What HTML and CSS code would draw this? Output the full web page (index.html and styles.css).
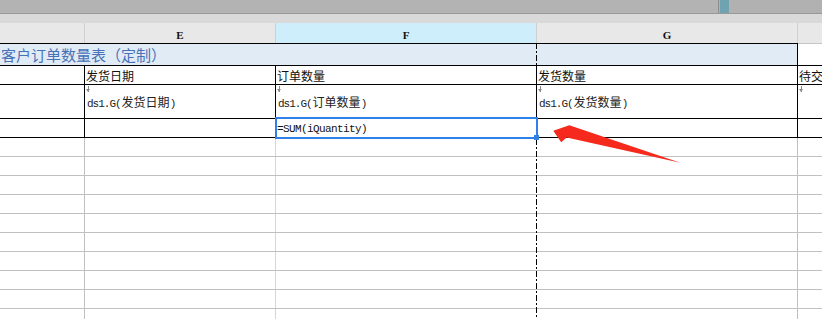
FILE: index.html
```html
<!DOCTYPE html>
<html lang="zh-CN">
<head>
  <meta charset="UTF-8" />
  <meta name="viewport" content="width=device-width, initial-scale=1.0"/>
  <title>客户订单数量表</title>
  <link rel="stylesheet" href="styles.css">
</head>
<body>

  <div class="scrollbar">
    <div class="thumb"></div>
    <div class="marker"></div>
  </div>
  <div class="strip"></div>

  <div class="sheet">
    <div class="colhead">
      <div class="c a"></div>
      <div class="c e">E</div>
      <div class="c f active">F</div>
      <div class="c g">G</div>
      <div class="c h"></div>
    </div>

    <div class="row title">
      <div class="c merged">客户订单数量表（定制）</div>
      <div class="c h"></div>
    </div>

    <div class="row dark labels">
      <div class="c a"></div>
      <div class="c e">发货日期</div>
      <div class="c f">订单数量</div>
      <div class="c g">发货数量</div>
      <div class="c h">待交数量</div>
    </div>

    <div class="row dark fields">
      <div class="c a"></div>
      <div class="c e"><span class="mark"></span><span class="code">ds1.G(</span>发货日期<span class="code">)</span></div>
      <div class="c f"><span class="mark"></span><span class="code">ds1.G(</span>订单数量<span class="code">)</span></div>
      <div class="c g"><span class="mark"></span><span class="code">ds1.G(</span>发货数量<span class="code">)</span></div>
      <div class="c h"><span class="mark"></span></div>
    </div>

    <div class="row dark sum">
      <div class="c a"></div>
      <div class="c e"></div>
      <div class="c f"><span class="formula">=SUM(iQuantity)</span></div>
      <div class="c g"></div>
      <div class="c h"></div>
    </div>

    <div class="row grid"><div class="c a"></div><div class="c e"></div><div class="c f"></div><div class="c g"></div><div class="c h"></div></div>
    <div class="row grid"><div class="c a"></div><div class="c e"></div><div class="c f"></div><div class="c g"></div><div class="c h"></div></div>
    <div class="row grid"><div class="c a"></div><div class="c e"></div><div class="c f"></div><div class="c g"></div><div class="c h"></div></div>
    <div class="row grid"><div class="c a"></div><div class="c e"></div><div class="c f"></div><div class="c g"></div><div class="c h"></div></div>
    <div class="row grid"><div class="c a"></div><div class="c e"></div><div class="c f"></div><div class="c g"></div><div class="c h"></div></div>
    <div class="row grid"><div class="c a"></div><div class="c e"></div><div class="c f"></div><div class="c g"></div><div class="c h"></div></div>
    <div class="row grid"><div class="c a"></div><div class="c e"></div><div class="c f"></div><div class="c g"></div><div class="c h"></div></div>
    <div class="row grid"><div class="c a"></div><div class="c e"></div><div class="c f"></div><div class="c g"></div><div class="c h"></div></div>
    <div class="row grid"><div class="c a"></div><div class="c e"></div><div class="c f"></div><div class="c g"></div><div class="c h"></div></div>
    <div class="row grid"><div class="c a"></div><div class="c e"></div><div class="c f"></div><div class="c g"></div><div class="c h"></div></div>

    <div class="pagebreak"></div>
    <div class="selection"><span class="handle"></span></div>

    <svg class="pointer" width="135" height="45" viewBox="0 0 135 45">
      <polygon points="3.3,7.7 19.3,2.2 130.3,39.7 16.7,14.6 11.2,19.2" fill="#f5291c"/>
    </svg>
  </div>

</body>
</html>
```

FILE: styles.css
```css
body {
  margin: 0;
  width: 822px;
  height: 319px;
  overflow: hidden;
  background: #fff;
  font-family: "Noto Sans CJK SC", sans-serif;
  color: #111;
}

.scrollbar {
  display: flex;
  height: 13px;
  background: #b1b1b1;
  border-bottom: 1px solid #989898;
}

.scrollbar .thumb {
  width: 719px;
  box-sizing: border-box;
  background: #b3b3b3;
  border-right: 1px solid #8e8e8e;
}

.scrollbar .marker {
  width: 9px;
  margin-left: 1px;
  background: #6fa3b2;
}

.strip {
  height: 9px;
  background: #d9d9d9;
}

.sheet {
  position: relative;
}

.colhead,
.row {
  display: flex;
}

.c {
  box-sizing: border-box;
  border-right: 1px solid transparent;
  white-space: nowrap;
  overflow: hidden;
}

.a { width: 85px; }
.e { width: 191px; }
.f { width: 261px; }
.g { width: 261px; }
.h { flex: 1; border-right: none; }

/* column letters */
.colhead {
  height: 20px;
  background: #e8e8e8;
}

.colhead .c {
  border-right-color: #d0d0d0;
  text-align: center;
  font-family: "Liberation Serif", serif;
  font-weight: bold;
  font-size: 11px;
  line-height: 20px;
  padding-top: 2px;
  color: #111;
}

.colhead .active {
  background: #cdeefa;
}

/* title row */
.title .c {
  height: 23px;
  border-top: 1px solid #000;
  border-bottom: 1px solid #000;
}

.title .merged {
  width: 798px;
  background: #e1ebf5;
  border-right-color: #000;
  font-size: 15px;
  line-height: 21px;
  color: #4872b8;
  padding-left: 1px;
}

.title .h {
  border-top-color: #c6c6c6;
}

/* bordered rows */
.dark {
  border-bottom: 1px solid #000;
}

.dark .a,
.dark .e,
.dark .f,
.dark .g {
  border-right-color: #000;
}

.labels .c {
  height: 18px;
  font-size: 12px;
  line-height: 19px;
  padding-left: 1px;
}

.fields .c {
  position: relative;
  height: 33px;
  font-size: 12px;
  line-height: 33px;
  padding-left: 2px;
  color: #222;
}

.fields .mark {
  position: absolute;
  left: 1px;
  top: 1px;
  width: 5px;
  height: 6px;
  background:
    linear-gradient(#8a8a8a, #8a8a8a) 2px 0 / 1px 6px no-repeat;
}

.fields .mark::after {
  content: "";
  position: absolute;
  left: 0;
  top: 3px;
  border-left: 2.5px solid transparent;
  border-right: 2.5px solid transparent;
  border-top: 3px solid #8a8a8a;
}

.code {
  font-family: "Liberation Mono", monospace;
  font-size: 11px;
  letter-spacing: -1px;
  margin-right: 1px;
}

.sum .c {
  height: 18px;
}

.formula {
  display: block;
  padding: 2px 0 0 1px;
  font-family: "Liberation Mono", monospace;
  font-size: 11px;
  letter-spacing: -0.6px;
  line-height: 16px;
  color: #111;
}

/* empty grid */
.grid {
  height: 18px;
  border-bottom: 1px solid #c0c0c0;
}

.grid .a,
.grid .g {
  border-right-color: #c0c0c0;
}

.grid .e {
  border-right-color: #d6d6d6;
}

/* overlays */
.pagebreak {
  position: absolute;
  left: 536px;
  top: 20px;
  width: 1px;
  height: 280px;
  background: repeating-linear-gradient(
    to bottom,
    #000 0, #000 6px,
    transparent 6px, transparent 8px,
    #000 8px, #000 10px,
    transparent 10px, transparent 12px
  );
}

.selection {
  position: absolute;
  left: 275px;
  top: 94px;
  width: 263px;
  height: 22px;
  box-sizing: border-box;
  border: 2px solid #2f80e8;
}

.selection .handle {
  position: absolute;
  right: -3px;
  bottom: -3px;
  width: 5px;
  height: 5px;
  background: #2f80e8;
}

.pointer {
  position: absolute;
  left: 550px;
  top: 100px;
}
```
